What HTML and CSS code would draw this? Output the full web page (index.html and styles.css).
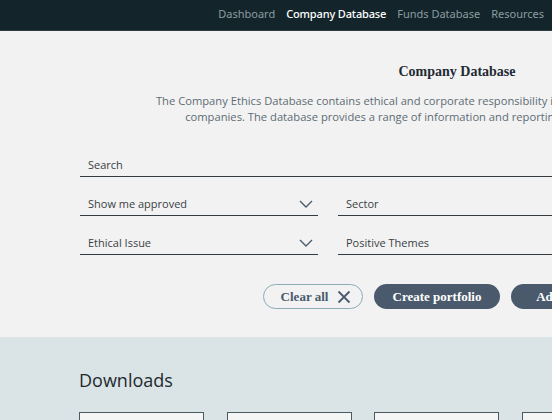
FILE: index.html
```html
<!DOCTYPE html>
<html>
<head>
<meta charset="utf-8">
<link rel="stylesheet" href="styles.css">
</head>
<body>
<header class="topbar">
  <nav class="nav">
    <a class="nav-link">Dashboard</a>
    <a class="nav-link active">Company Database</a>
    <a class="nav-link">Funds Database</a>
    <a class="nav-link">Resources</a>
  </nav>
</header>
<main class="page">
  <section class="intro">
    <h1 class="title">Company Database</h1>
    <p class="desc">The Company Ethics Database contains ethical and corporate responsibility information on the world's largest listed<br>companies. The database provides a range of information and reporting options to suit ethical investors.</p>
    <form class="filters">
      <div class="field full"><span class="label">Search</span></div>
      <div class="field select"><span class="label">Show me approved</span><svg class="chev" viewBox="0 0 14 8"><path d="M1 1l6 6 6-6" fill="none" stroke="#4a5a6c" stroke-width="1.4"/></svg></div>
      <div class="field select"><span class="label">Sector</span><svg class="chev" viewBox="0 0 14 8"><path d="M1 1l6 6 6-6" fill="none" stroke="#4a5a6c" stroke-width="1.4"/></svg></div>
      <div class="field select"><span class="label">Country</span><svg class="chev" viewBox="0 0 14 8"><path d="M1 1l6 6 6-6" fill="none" stroke="#4a5a6c" stroke-width="1.4"/></svg></div>
      <div class="field select"><span class="label">Ethical Issue</span><svg class="chev" viewBox="0 0 14 8"><path d="M1 1l6 6 6-6" fill="none" stroke="#4a5a6c" stroke-width="1.4"/></svg></div>
      <div class="field select"><span class="label">Positive Themes</span><svg class="chev" viewBox="0 0 14 8"><path d="M1 1l6 6 6-6" fill="none" stroke="#4a5a6c" stroke-width="1.4"/></svg></div>
      <div class="field select"><span class="label">Index</span><svg class="chev" viewBox="0 0 14 8"><path d="M1 1l6 6 6-6" fill="none" stroke="#4a5a6c" stroke-width="1.4"/></svg></div>
    </form>
    <div class="actions">
      <button class="btn btn-outline">Clear all <svg class="x" viewBox="0 0 14 14"><path d="M1.5 1.5l11 11M12.5 1.5l-11 11" stroke="#4a5a6c" stroke-width="1.8" fill="none"/></svg></button>
      <button class="btn btn-solid btn-create">Create portfolio</button>
      <button class="btn btn-solid btn-add">Add to portfolio</button>
    </div>
  </section>
  <section class="downloads">
    <h2 class="dl-title">Downloads</h2>
    <div class="cards">
      <div class="card"></div>
      <div class="card"></div>
      <div class="card"></div>
      <div class="card"></div>
      <div class="card"></div>
    </div>
  </section>
</main>
</body>
</html>
```
FILE: styles.css
```css
html, body {
  margin: 0;
  padding: 0;
  overflow: hidden;
}
body {
  background: #f2f2f2;
  font-family: "Open Sans", "Noto Sans", sans-serif;
  width: 552px;
  height: 420px;
}
.topbar {
  width: 552px;
  height: 31px;
  background: #13252a;
  border-bottom: 1px solid #2a3c40;
  box-sizing: border-box;
}
.nav {
  display: flex;
  justify-content: flex-end;
  align-items: center;
  height: 26px;
  padding-right: 8px;
  gap: 11px;
}
.nav-link {
  font-family: "Noto Sans", "Open Sans", sans-serif;
  font-size: 11px;
  color: #8d9ca1;
}
.nav-link.active {
  color: #ffffff;
  font-weight: 500;
  letter-spacing: -0.15px;
}
.page {
  width: 916px;
}
.intro {
  background: #f2f2f2;
  height: 306px;
  padding: 0 82px 0 80px;
  box-sizing: border-box;
  overflow: hidden;
}
.title {
  margin: 31px 0 0;
  text-align: center;
  font-family: "Liberation Serif", "DejaVu Serif", serif;
  font-size: 14px;
  font-weight: bold;
  color: #1e2a33;
  line-height: 20px;
}
.desc {
  margin: 11px -40px 0;
  text-align: center;
  font-size: 11.2px;
  line-height: 16px;
  color: #5d6c74;
  white-space: nowrap;
}
.filters {
  margin-top: 27px;
  display: grid;
  grid-template-columns: repeat(3, 238px);
  column-gap: 20px;
  row-gap: 14px;
}
.field {
  display: flex;
  align-items: center;
  justify-content: space-between;
  height: 25px;
  box-sizing: border-box;
  padding: 1px 5px 0 8px;
  border-bottom: 1px solid #333b40;
  font-size: 11px;
  color: #3a3f44;
}
.field.full {
  grid-column: 1 / -1;
}
.chev {
  width: 14px;
  height: 8px;
}
.actions {
  margin-top: 29px;
  display: flex;
  justify-content: center;
  gap: 11px;
}
.btn {
  height: 25px;
  border-radius: 13px;
  font-family: "Liberation Serif", "DejaVu Serif", serif;
  font-size: 13px;
  font-weight: bold;
  white-space: nowrap;
  padding: 0;
  display: flex;
  align-items: center;
  justify-content: center;
  gap: 9px;
  box-sizing: border-box;
}
.btn-outline {
  width: 100px;
  padding-left: 6px;
  background: transparent;
  border: 1px solid #8eacb7;
  color: #4a5a6c;
}
.btn-solid {
  background: #4a5a6c;
  border: none;
  color: #ffffff;
}
.btn-create { width: 126px; }
.btn-add { width: 140px; }
.x {
  width: 14px;
  height: 14px;
}
.downloads {
  background: #dae3e5;
  height: 120px;
  padding: 30px 80px 0 79px;
  box-sizing: border-box;
}
.dl-title {
  margin: 0;
  font-size: 18px;
  font-weight: normal;
  color: #222a2e;
  line-height: 26px;
}
.cards {
  margin-top: 19px;
  display: flex;
  gap: 22.5px;
}
.card {
  width: 125px;
  height: 60px;
  border: 1px solid #4b5a5f;
  background: #f4f6f6;
  box-sizing: border-box;
}
```
